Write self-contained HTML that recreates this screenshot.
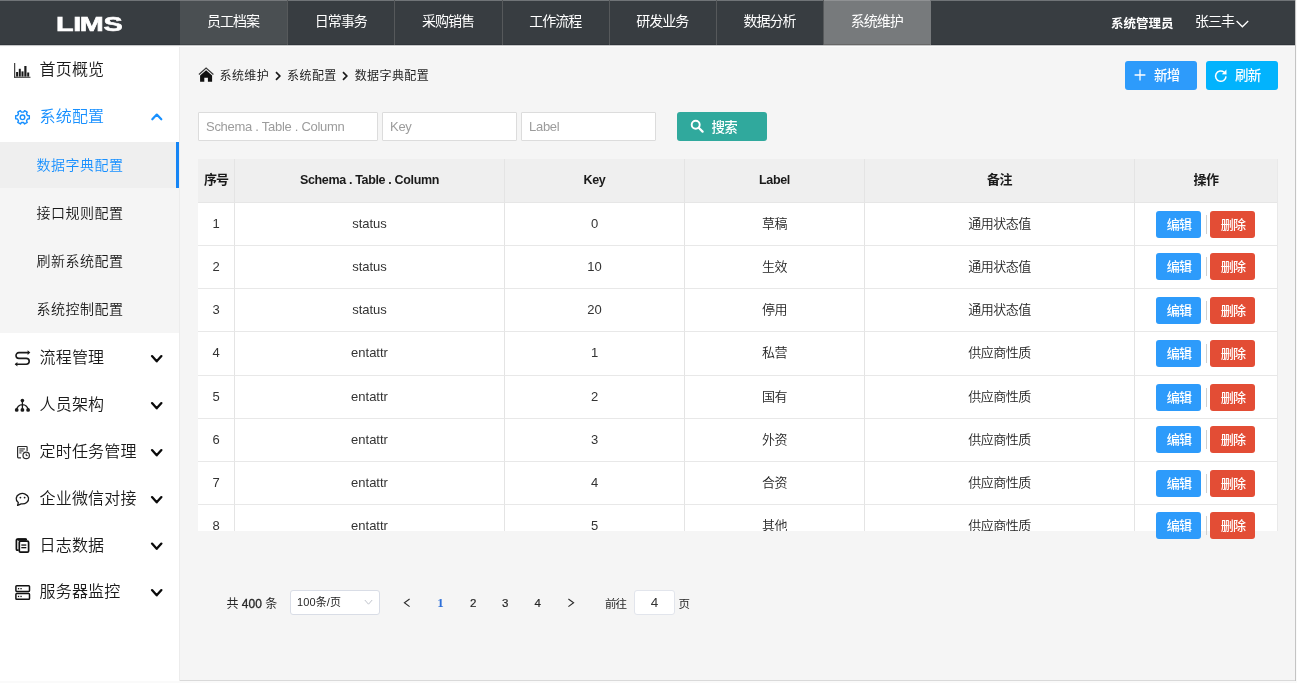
<!DOCTYPE html>
<html lang="zh-CN">
<head>
<meta charset="utf-8">
<title>LIMS</title>
<style>
*{box-sizing:border-box;margin:0;padding:0}
html,body{width:1297px;height:683px;overflow:hidden;background:#fafafa}
body{font-family:"Liberation Sans","Noto Sans CJK SC",sans-serif;color:#222;position:relative;font-size:14px}
.frame{will-change:transform;position:absolute;left:0;top:0;width:1296px;height:681px;overflow:hidden;background:#f5f5f5;border-right:1px solid #c4c4c4}
.abs{position:absolute;white-space:nowrap}
/* header */
.hdr{position:absolute;left:0;top:0;width:1295px;height:45px;background:#383d41;border-top:1px solid #707477;border-bottom:1px solid #30353a}
.nav{position:absolute;left:180px;top:-1px;height:46px;display:flex}
.nav div{width:107.2px;height:46px;line-height:43px;text-align:center;color:#fff;font-size:14px;letter-spacing:-1px;border-right:1px solid #56595b;padding-right:1px}
.nav div.first{width:108.2px;background:linear-gradient(#74777a 0,#74777a 1px,#4a4f52 1px,#4a4f52 44px,#3f4447 44px)}
.nav div.on{background:linear-gradient(#8f9193 0,#8f9193 1px,#777a7c 1px,#777a7c 44px,#666 44px);border-right-color:#777a7c}
.user{position:absolute;top:-1px;height:45px;color:#fff;white-space:nowrap}
/* sidebar */
.side{position:absolute;left:0;top:45px;width:180px;height:636px;background:#fff;border-right:1px solid #ececec}
.mi{position:absolute;left:39.5px;height:24px;line-height:26px;font-size:16px;letter-spacing:0.2px;color:#1a1a1a;font-weight:350;white-space:nowrap}
.mi.blue{color:#1890ff}
.sub{position:absolute;left:0;top:97px;width:179px;height:191px;background:#f5f5f5}
.si{position:absolute;left:0;width:179px;height:46px;line-height:46px;font-size:14px;color:#1a1a1a;padding-left:36.5px;letter-spacing:0.5px;font-weight:350}
.si.on{background:#efefef;color:#1890ff;border-right:3px solid #1585f5}
.icons{position:absolute;left:0;top:0;width:180px;height:683px;pointer-events:none}
/* main */
.main{position:absolute;left:180px;top:45px;width:1115px;height:636px;border-bottom:1px solid #d9d9d9}
.bc{position:absolute;left:39.5px;top:23px;font-size:12px;letter-spacing:0.4px;line-height:16px;color:#262626;white-space:nowrap}
.btn{position:absolute;color:#fff;border-radius:3px;white-space:nowrap;height:29px}
.btn span{position:absolute;top:0;line-height:29px;font-size:13.5px;letter-spacing:-0.7px;font-weight:500}
.inp{position:absolute;top:67px;height:29px;background:#fff;border:1px solid #dcdcdc;border-radius:1px;font-size:13px;line-height:27px;color:#9c9c9c;padding-left:7px;white-space:nowrap;letter-spacing:-0.28px}
/* table */
.twrap{position:absolute;left:18px;top:114px;width:1080px;height:372px;overflow:hidden;background:#fff;border-right:1px solid #e9e9e9}
table{border-collapse:separate;border-spacing:0;table-layout:fixed;width:1079px}
th,td{border-right:1px solid #e4e4e4;border-bottom:1px solid #e8e8e8;text-align:center;font-size:13px;color:#333;height:43px;padding:0;white-space:nowrap}
th{background:#efefef;font-weight:bold;color:#1a1a1a;height:44px;border-bottom-color:#e6e6e6}
th:last-child,td:last-child{border-right:none}
td,th{padding-bottom:2px}
td.c,th.c{padding-bottom:4px;letter-spacing:-0.5px}
th.c{padding-bottom:5px}
th.l{font-size:12.5px;letter-spacing:-0.35px}
td.c{font-weight:350;color:#1f1f1f}
.ops{position:absolute;left:976.4px;width:100px;height:27px}
.b1,.b2{position:absolute;top:0;width:45px;height:27px;line-height:28px;color:#fff;border-radius:3px;font-size:13px;letter-spacing:-0.8px;text-align:center;padding-right:0;font-weight:500}
.b1{left:0;background:#2d9bfb}
.b2{left:54px;background:#e34d35}
.sep{position:absolute;left:49.5px;top:4px;width:1px;height:19px;background:#d0d0d0}
/* pagination */
.pg{position:absolute;top:544px;height:26px;line-height:26px;font-size:13px;color:#262626;white-space:nowrap}
.pn{width:20px;text-align:center;font-size:11.5px;top:544.5px;-webkit-text-stroke:0.2px #262626}
</style>
</head>
<body>
<div class="frame">
  <div class="hdr">
    <svg class="abs" style="left:0;top:0" width="180" height="44" viewBox="0 0 180 44"><text transform="scale(1.44,1)" x="38.889 50.833 55.417 71.944" y="29.9" font-family="Liberation Sans, sans-serif" font-weight="bold" font-size="20" fill="#fff" stroke="#fff" stroke-width="0.6">LIMS</text></svg>
    <div class="nav">
      <div class="first">员工档案</div><div>日常事务</div><div>采购销售</div><div>工作流程</div><div>研发业务</div><div>数据分析</div><div class="on">系统维护</div>
    </div>
    <div class="user" style="left:1111px;font-size:12.5px;font-weight:bold;letter-spacing:0;line-height:49px">系统管理员</div>
    <div class="user" style="left:1195px;font-size:14px;letter-spacing:-1px;line-height:43px">张三丰</div>
    <svg class="abs" style="left:1235px;top:18px" width="15" height="10" viewBox="0 0 15 10"><path d="M1.6 2 L7.4 7.8 L13.2 2" fill="none" stroke="#fff" stroke-width="1.3"/></svg>
  </div>

  <div class="abs" style="left:0;top:45px;width:1295px;height:1px;background:#c6c7c8;z-index:5"></div>
  <div class="abs" style="left:0;top:46px;width:1295px;height:1px;background:#fbfbfb;z-index:5"></div>
  <div class="side">
    <div class="mi" style="top:12px">首页概览</div>
    <div class="mi blue" style="top:59px">系统配置</div>
    <div class="sub">
      <div class="si on" style="top:0">数据字典配置</div>
      <div class="si" style="top:48px">接口规则配置</div>
      <div class="si" style="top:96px">刷新系统配置</div>
      <div class="si" style="top:144px">系统控制配置</div>
    </div>
    <div class="mi" style="top:300px">流程管理</div>
    <div class="mi" style="top:347px">人员架构</div>
    <div class="mi" style="top:394px">定时任务管理</div>
    <div class="mi" style="top:441px">企业微信对接</div>
    <div class="mi" style="top:488px">日志数据</div>
    <div class="mi" style="top:534px">服务器监控</div>
  </div>

  <svg class="icons" viewBox="0 0 180 683">
    <!-- bar chart -->
    <g fill="#1a1a1a">
      <rect x="14.2" y="63" width="1" height="14.6"/>
      <rect x="14.2" y="76.8" width="16.3" height="0.9"/>
      <rect x="16.1" y="72" width="2" height="4.6"/>
      <rect x="18.8" y="68.8" width="2" height="7.8"/>
      <rect x="21.5" y="71.4" width="2" height="5.2"/>
      <rect x="24.3" y="66" width="2.2" height="10.6"/>
      <rect x="27.2" y="72.5" width="2" height="4.1"/>
    </g>
    <!-- gear -->
    <path d="M27.52 115.61 L29.33 115.77 L29.33 118.83 L27.52 118.99 L26.48 120.80 L27.24 122.45 L24.59 123.98 L23.55 122.50 L21.45 122.50 L20.41 123.98 L17.76 122.45 L18.52 120.80 L17.48 118.99 L15.67 118.83 L15.67 115.77 L17.48 115.61 L18.52 113.80 L17.76 112.15 L20.41 110.62 L21.45 112.10 L23.55 112.10 L24.59 110.62 L27.24 112.15 L26.48 113.80 Z" fill="none" stroke="#1890ff" stroke-width="1.4" stroke-linejoin="round"/>
    <circle cx="22.5" cy="117.3" r="2.3" fill="none" stroke="#1890ff" stroke-width="1.4"/>
    <!-- chevron up -->
    <path d="M152.3 119.3 L156.8 114.6 L161.3 119.3" fill="none" stroke="#1890ff" stroke-width="2.2" stroke-linecap="round" stroke-linejoin="round"/>
    <!-- flow icon -->
    <g fill="none" stroke="#1a1a1a" stroke-width="1.6" stroke-linecap="round" stroke-linejoin="round">
      <path d="M28.6 352.6 H18.9 A2.9 2.9 0 0 0 18.9 358.4 H26.3 A2.9 2.9 0 0 1 26.3 364.2 H16"/>
    </g>
    <path d="M27.6 350.3 L30.3 352.6 L27.6 354.9 Z" fill="#1a1a1a"/>
    <path d="M17.4 361.9 L14.7 364.2 L17.4 366.5 Z" fill="#1a1a1a"/>
    <!-- org tree -->
    <g fill="#1a1a1a">
      <circle cx="22.4" cy="400.6" r="1.8"/>
      <circle cx="22.4" cy="409.9" r="1.9"/>
      <circle cx="16.7" cy="409.9" r="1.9"/>
      <circle cx="28.1" cy="409.9" r="1.9"/>
    </g>
    <path d="M22.4 400.6 V409.9 M16.7 409.9 A5.7 5.2 0 0 1 28.1 409.9" fill="none" stroke="#1a1a1a" stroke-width="1.3"/>
    <!-- timed task -->
    <g fill="none" stroke="#2a2a2a" stroke-width="1.2" stroke-linejoin="round">
      <path d="M21 457.8 H18.4 Q17.6 457.8 17.6 457 V447.3 Q17.6 446.5 18.4 446.5 H26.3 Q27.1 446.5 27.1 447.3 V451"/>
      <circle cx="26.2" cy="455.4" r="3.2" fill="#fff"/>
      <path d="M26.2 453.6 V455.6 H27.6" stroke-width="1"/>
    </g>
    <g fill="#2a2a2a">
      <rect x="19.3" y="448.4" width="5.6" height="1.1"/>
      <rect x="19.3" y="450.4" width="4.2" height="1.1"/>
      <rect x="19.3" y="452.4" width="2.2" height="1"/>
    </g>
    <!-- chat bubble -->
    <path d="M18.3 502.6 A6.2 5.2 0 1 1 21.2 503.8 L17.6 505.4 Z" fill="none" stroke="#1a1a1a" stroke-width="1.3" stroke-linejoin="round"/>
    <circle cx="20.4" cy="497.6" r="0.9" fill="#1a1a1a"/>
    <circle cx="24.6" cy="497.6" r="0.9" fill="#1a1a1a"/>
    <!-- log docs -->
    <g fill="none" stroke="#111" stroke-width="1.7" stroke-linejoin="round">
      <path d="M18.6 550.2 H17.4 Q16.4 550.2 16.4 549.2 V540.2 Q16.4 539.2 17.4 539.2 H25.4 Q26.4 539.2 26.4 540"/>
      <rect x="19.3" y="541.2" width="9.3" height="11" rx="1.2" fill="#fff"/>
    </g>
    <rect x="17.6" y="538.4" width="8.9" height="2.4" fill="#111"/>
    <rect x="21.3" y="544.4" width="5" height="1.3" fill="#111"/>
    <rect x="21.3" y="547" width="5" height="1.3" fill="#111"/>
    <!-- server -->
    <g fill="none" stroke="#111" stroke-width="1.5">
      <rect x="15.9" y="585.8" width="13.6" height="5.6" rx="0.8"/>
      <rect x="15.9" y="593.6" width="13.6" height="5.6" rx="0.8"/>
    </g>
    <g fill="#111">
      <rect x="17.9" y="588" width="1.3" height="1.3"/><rect x="20.4" y="588" width="1.3" height="1.3"/>
      <rect x="17.9" y="595.8" width="1.3" height="1.3"/><rect x="20.4" y="595.8" width="1.3" height="1.3"/>
    </g>
    <path d="M152.0 356.1 L156.7 361.3 L161.4 356.1" fill="none" stroke="#0a0a0a" stroke-width="2.3" stroke-linecap="round" stroke-linejoin="round"/>
    <path d="M152.0 403.1 L156.7 408.3 L161.4 403.1" fill="none" stroke="#0a0a0a" stroke-width="2.3" stroke-linecap="round" stroke-linejoin="round"/>
    <path d="M152.0 450.1 L156.7 455.3 L161.4 450.1" fill="none" stroke="#0a0a0a" stroke-width="2.3" stroke-linecap="round" stroke-linejoin="round"/>
    <path d="M152.0 497.1 L156.7 502.3 L161.4 497.1" fill="none" stroke="#0a0a0a" stroke-width="2.3" stroke-linecap="round" stroke-linejoin="round"/>
    <path d="M152.0 543.6 L156.7 548.8 L161.4 543.6" fill="none" stroke="#0a0a0a" stroke-width="2.3" stroke-linecap="round" stroke-linejoin="round"/>
    <path d="M152.0 590.1 L156.7 595.3 L161.4 590.1" fill="none" stroke="#0a0a0a" stroke-width="2.3" stroke-linecap="round" stroke-linejoin="round"/>
  </svg>

  <div class="main">
    <svg class="abs" style="left:18px;top:22px" width="17" height="16" viewBox="0 0 17 16"><path d="M0.9 7.5 L8.1 1 L15.4 7.5" fill="none" stroke="#3a3a3a" stroke-width="1.2"/><path d="M2.1 8.6 L8.1 3.3 L14.1 8.6 V14.8 H9.9 V10.8 H6.3 V14.8 H2.1 Z" fill="#111"/></svg>
    <div class="bc">系统维护<svg width="6" height="10" viewBox="0 0 6 10" style="margin:0 6.4px 0 5.6px;vertical-align:-0.5px"><path d="M1 1.2 L4.8 5 L1 8.8" fill="none" stroke="#1a1a1a" stroke-width="1.7"/></svg>系统配置<svg width="6" height="10" viewBox="0 0 6 10" style="margin:0 6.4px 0 5.6px;vertical-align:-0.5px"><path d="M1 1.2 L4.8 5 L1 8.8" fill="none" stroke="#1a1a1a" stroke-width="1.7"/></svg>数据字典配置</div>
    <div class="btn" style="left:945px;top:16px;width:72px;background:#2d9bfb">
      <svg class="abs" style="left:9px;top:8px" width="12" height="12" viewBox="0 0 12 12"><path d="M6 0.6 V11.4 M0.6 6 H11.4" stroke="#fff" stroke-width="1.3" fill="none"/></svg>
      <span style="left:29px">新增</span>
    </div>
    <div class="btn" style="left:1026px;top:16px;width:72px;background:#02b3fd">
      <svg class="abs" style="left:8px;top:7.5px" width="14" height="14" viewBox="0 0 14 14"><path d="M12 7.4 A5.2 5.2 0 1 1 10.2 3.2" fill="none" stroke="#fff" stroke-width="1.5"/><path d="M7.8 5.2 L12.6 5.4 L12.4 0.6 Z" fill="#fff"/></svg>
      <span style="left:29px">刷新</span>
    </div>
    <div class="inp" style="left:18px;width:180px">Schema . Table . Column</div>
    <div class="inp" style="left:202px;width:135px">Key</div>
    <div class="inp" style="left:341px;width:135px">Label</div>
    <div class="btn" style="left:497px;top:67px;width:90px;height:29px;background:#30a99d;border-radius:3px">
      <svg class="abs" style="left:13px;top:7px" width="14" height="14" viewBox="0 0 14 14"><circle cx="5.7" cy="5.7" r="4" fill="none" stroke="#fff" stroke-width="1.9"/><path d="M8.7 8.7 L12.6 12.6" stroke="#fff" stroke-width="2.2" stroke-linecap="round"/></svg>
      <span style="left:34.5px;line-height:31px">搜索</span>
    </div>

    <div class="twrap">
      <table>
        <colgroup><col style="width:37px"><col style="width:270px"><col style="width:180px"><col style="width:180px"><col style="width:270px"><col style="width:142px"></colgroup>
        <tr><th class="c" style="letter-spacing:-1px">序号</th><th class="l">Schema . Table . Column</th><th class="l">Key</th><th class="l">Label</th><th class="c">备注</th><th class="c">操作</th></tr>
        <tr style="height:43px"><td>1</td><td>status</td><td>0</td><td class="c">草稿</td><td class="c">通用状态值</td><td></td></tr>
        <tr style="height:43px"><td>2</td><td>status</td><td>10</td><td class="c">生效</td><td class="c">通用状态值</td><td></td></tr>
        <tr style="height:43px"><td>3</td><td>status</td><td>20</td><td class="c">停用</td><td class="c">通用状态值</td><td></td></tr>
        <tr style="height:44px"><td>4</td><td>entattr</td><td>1</td><td class="c">私营</td><td class="c">供应商性质</td><td></td></tr>
        <tr style="height:43px"><td>5</td><td>entattr</td><td>2</td><td class="c">国有</td><td class="c">供应商性质</td><td></td></tr>
        <tr style="height:43px"><td>6</td><td>entattr</td><td>3</td><td class="c">外资</td><td class="c">供应商性质</td><td></td></tr>
        <tr style="height:43px"><td>7</td><td>entattr</td><td>4</td><td class="c">合资</td><td class="c">供应商性质</td><td></td></tr>
        <tr style="height:43px"><td>8</td><td>entattr</td><td>5</td><td class="c">其他</td><td class="c">供应商性质</td><td></td></tr>
      </table>
    </div>
    <div class="ops" style="top:166px"><span class="b1">编辑</span><span class="sep"></span><span class="b2">删除</span></div>
    <div class="ops" style="top:208px"><span class="b1">编辑</span><span class="sep"></span><span class="b2">删除</span></div>
    <div class="ops" style="top:252px"><span class="b1">编辑</span><span class="sep"></span><span class="b2">删除</span></div>
    <div class="ops" style="top:295px"><span class="b1">编辑</span><span class="sep"></span><span class="b2">删除</span></div>
    <div class="ops" style="top:339px"><span class="b1">编辑</span><span class="sep"></span><span class="b2">删除</span></div>
    <div class="ops" style="top:381px"><span class="b1">编辑</span><span class="sep"></span><span class="b2">删除</span></div>
    <div class="ops" style="top:425px"><span class="b1">编辑</span><span class="sep"></span><span class="b2">删除</span></div>
    <div class="ops" style="top:467px"><span class="b1">编辑</span><span class="sep"></span><span class="b2">删除</span></div>

    <div class="pg" style="left:46.5px;top:546px;font-size:12px">共 <span style="-webkit-text-stroke:0.3px #262626">400</span> 条</div>
    <div class="pg" style="left:110px;top:545px;width:90px;height:25px;background:#fff;border:1px solid #d9dde6;border-radius:3px;font-size:11px;line-height:23px;padding-left:6px;letter-spacing:0.1px">100条/页</div>
    <svg class="abs" style="left:184px;top:554px" width="9" height="7" viewBox="0 0 9 7"><path d="M0.8 1 L4.5 5.2 L8.2 1" fill="none" stroke="#c0c4cc" stroke-width="1"/></svg>
    <svg class="abs" style="left:223px;top:553px" width="8" height="10" viewBox="0 0 8 10"><path d="M6.6 1 L1.4 4.8 L6.6 8.6" fill="none" stroke="#2a2a2a" stroke-width="1.1"/></svg>
    <div class="pg pn" style="left:250.5px;color:#2d6fd8;font-weight:bold;font-family:'Liberation Serif','Liberation Sans',serif;font-size:13px;-webkit-text-stroke:0">1</div>
    <div class="pg pn" style="left:283.3px">2</div>
    <div class="pg pn" style="left:315.3px">3</div>
    <div class="pg pn" style="left:347.8px">4</div>
    <svg class="abs" style="left:387px;top:553px" width="8" height="10" viewBox="0 0 8 10"><path d="M1.4 1 L6.6 4.8 L1.4 8.6" fill="none" stroke="#2a2a2a" stroke-width="1.1"/></svg>
    <div class="pg" style="left:425px;top:545.5px;font-size:11.5px;letter-spacing:-1px">前往</div>
    <div class="pg" style="left:454px;top:545px;width:41px;height:25px;background:#fff;border:1px solid #e2e5ec;border-radius:3px;text-align:center;line-height:23.5px;font-size:13.5px;color:#333">4</div>
    <div class="pg" style="left:498.5px;top:545.5px;font-size:11.5px">页</div>
  </div>
</div>
</body>
</html>
